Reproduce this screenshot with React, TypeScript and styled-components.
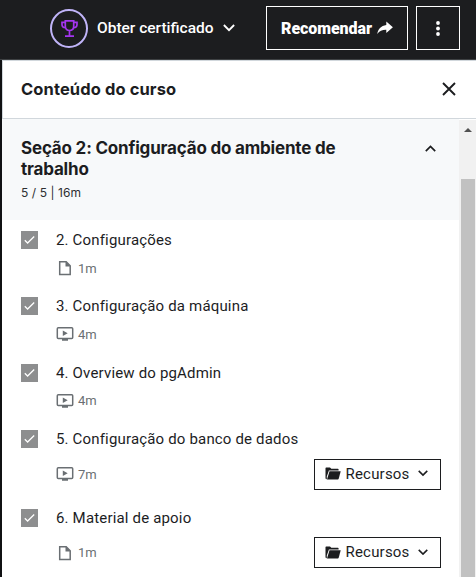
import React from 'react';
import styled, { createGlobalStyle } from 'styled-components';

const Global = createGlobalStyle`
  * { box-sizing: border-box; }
  html, body { margin: 0; overflow: hidden; background: #101113; }
  body, button { font-family: Roboto, "Liberation Sans", sans-serif; color: #1c1d1f; }
  button { padding: 0; margin: 0; background: none; border: 0; border-radius: 0; text-align: left; }
  h2, h3, ul { margin: 0; padding: 0; }
  svg { display: block; flex: none; }
`;

const Page = styled.div`
  width: 476px;
  height: 577px;
  display: flex;
  flex-direction: column;
  overflow: hidden;
`;

const TopBar = styled.header`
  flex: none;
  height: 60px;
  background: #1c1d1f;
  border-bottom: 1px solid #3e4143;
  display: flex;
  align-items: flex-start;
  padding: 6px 16px 0 50px;
`;

const Certificate = styled.button`
  display: flex;
  align-items: center;
  width: 216px;
  height: 44px;
  color: #fff;
`;

const Ring = styled.span`
  width: 38px;
  height: 39px;
  border: 2px solid #c0b4f8;
  border-radius: 50%;
  display: flex;
  align-items: center;
  justify-content: center;
  margin-right: 9px;
`;

const Txt = styled.span<{ $size: number; $weight?: number; $space?: number; $w?: number }>`
  font-size: ${p => p.$size}px;
  font-weight: ${p => p.$weight ?? 400};
  letter-spacing: ${p => p.$space ?? 0}px;
  width: ${p => (p.$w ? `${p.$w}px` : 'auto')};
  white-space: nowrap;
`;

const BarButton = styled.button<{ $width: number }>`
  width: ${p => p.$width}px;
  height: 44px;
  border: 1px solid #fff;
  color: #fff;
  display: flex;
  align-items: center;
  justify-content: center;
  gap: 5px;
  & + & { margin-left: 8px; }
`;

const Panel = styled.aside`
  flex: 1;
  min-height: 0;
  margin-left: 2px;
  background: #fff;
  border-top: 1px solid #d1d7dc;
  display: flex;
  flex-direction: column;
`;

const PanelHeader = styled.div`
  flex: none;
  height: 58px;
  border-left: 1px solid #d1d7dc;
  border-bottom: 1px solid #d1d7dc;
  display: flex;
  align-items: center;
  justify-content: space-between;
  padding: 0 20px 1px 18px;
`;

const Heading = styled.h2`
  font: 700 16.5px/20px Inter, sans-serif;
  letter-spacing: 0.1px;
`;

const Body = styled.div`
  flex: 1;
  min-height: 0;
  display: flex;
`;

const Content = styled.div`
  width: 457px;
`;

const Section = styled.div`
  height: 101px;
  background: #f7f9fa;
  display: flex;
  justify-content: space-between;
  padding: 19px 23.5px 0 19px;
`;

const SectionTitle = styled.h3`
  font: 700 17px/21px Inter, sans-serif;
  letter-spacing: -0.19px;
  white-space: nowrap;
`;

const Progress = styled.div`
  display: flex;
  margin-top: 4px;
  font: 400 12px/17px Inter, sans-serif;
  letter-spacing: 0.08px;
  color: #2d2f31;
  white-space: pre;
`;

const Chevron = styled.span`
  padding-top: 7px;
`;

const Lesson = styled.li<{ $tall?: boolean }>`
  height: ${p => (p.$tall ? 78.6 : 66.4)}px;
  display: flex;
  padding: 11px 18px 0 19px;
`;

const Check = styled.span`
  width: 17px;
  height: 18px;
  background: #8d8e8f;
  display: flex;
  align-items: center;
  justify-content: center;
`;

const Detail = styled.div`
  flex: 1;
  margin-left: 18px;
`;

const Title = styled.div`
  height: 18px;
  line-height: 18px;
  display: flex;
`;

const Meta = styled.div<{ $tall?: boolean }>`
  height: ${p => (p.$tall ? 31 : 18)}px;
  margin-top: ${p => (p.$tall ? 10.5 : 10)}px;
  display: flex;
  align-items: center;
  color: #6a6f73;
`;

const Kind = styled.span`
  width: 22px;
`;

const Resources = styled.button`
  width: 127px;
  height: 31px;
  margin-left: auto;
  border: 1px solid #1c1d1f;
  display: flex;
  align-items: center;
  gap: 4.5px;
  padding: 0 0 1px 10px;
`;

const Scrollbar = styled.div`
  width: 17px;
  margin-top: 1px;
  background: #f1f1f1;
  display: flex;
  flex-direction: column;
  align-items: center;
  padding-top: 8px;
`;

const Thumb = styled.div`
  width: 14px;
  flex: 1;
  margin-top: 47px;
  background: #c1c1c1;
`;

const Arrow = ({ up, w = 11, sw = 1.7 }: { up?: boolean; w?: number; sw?: number }) => (
  <svg width={w} height={w * 0.64} viewBox="0 0 11 7" fill="none" stroke="currentColor" strokeWidth={sw}>
    <path d={up ? 'M.8 6.1 5.5 1.4l4.7 4.7' : 'M.8.9l4.7 4.7L10.2.9'} />
  </svg>
);

const Trophy = () => (
  <svg width="17" height="17" viewBox="0 0 17 17" fill="none" stroke="#a435f0" strokeWidth="1.7">
    <path d="M4.300.9h8.400v5.300c0 2.700-1.600 4.300-4.200 4.300S4.300 8.900 4.300 6.200zM4.300 2.300H1v2.200c0 2 1.200 3.200 3.500 3.200M12.700 2.300H16v2.200c0 2-1.200 3.200-3.500 3.200M8.500 10.500v5.400M4 16.100h9" />
  </svg>
);

const Share = () => (
  <svg width="16" height="14" viewBox="0 0 16 14" fill="currentColor">
    <path d="M9.300.5 15.900 6.300 9.300 12V8.700C5.300 8.600 2.500 9.800.3 13 .9 8.200 4 4.700 9.300 3.900z" />
  </svg>
);

const DocIcon = () => (
  <svg width="17" height="16" viewBox="0 0 17 16">
    <path d="M3.700 1.700h6.500L14.200 5.700v8.800H3.700z" fill="none" stroke="#6a6f73" strokeWidth="1.500" />
    <path d="M9.500 1.200 14.700 6.400H9.500z" fill="#6a6f73" />
  </svg>
);

const VideoIcon = () => (
  <svg width="18" height="16" viewBox="0 0 18 16">
    <rect x="1.300" y="1.700" width="15.400" height="10.800" rx="1" fill="none" stroke="#6a6f73" strokeWidth="1.500" />
    <path d="M6.800 4.400 11.700 7.200 6.800 10zM6 12.800h6v1.900h-6z" fill="#6a6f73" />
  </svg>
);

const Folder = () => (
  <svg width="16" height="13" viewBox="0 0 16 13" fill="#1c1d1f">
    <path d="M.5 1.200Q.5.500 1.200.500H5l1.300 1.300h6.500q.8 0 .8.800v1H3.900L1.800 9.500V12.200Q.5 12.200.5 11z" />
    <path d="M4.500 4.300h11.200l-2 7.400q-.2.700-.9.700H2z" />
  </svg>
);

type Item = { title: string; time: string; video?: boolean; resources?: boolean };
const lessons: Item[] = [
  { title: '2. Configurações', time: '1m' },
  { title: '3. Configuração da máquina', time: '4m', video: true },
  { title: '4. Overview do pgAdmin', time: '4m', video: true },
  { title: '5. Configuração do banco de dados', time: '7m', video: true, resources: true },
  { title: '6. Material de apoio', time: '1m', resources: true },
];

export default function App() {
  return (
    <Page>
      <Global />
      <TopBar>
        <Certificate>
          <Ring><Trophy /></Ring>
          <Txt $size={15.5} $weight={500} $w={126}>Obter certificado</Txt>
          <Arrow w={12} />
        </Certificate>
        <BarButton $width={142}>
          <Txt $size={16} $weight={900} $space={-0.07}>Recomendar</Txt>
          <Share />
        </BarButton>
        <BarButton $width={44} aria-label="Mais">
          <svg width="4" height="15" viewBox="0 0 4 15" fill="currentColor">
            <circle cx="2" cy="2" r="1.900" /><circle cx="2" cy="7.500" r="1.900" /><circle cx="2" cy="13" r="1.900" />
          </svg>
        </BarButton>
      </TopBar>
      <Panel>
        <PanelHeader>
          <Heading>Conteúdo do curso</Heading>
          <svg width="14" height="14" viewBox="0 0 14 14" stroke="#1c1d1f" strokeWidth="1.900">
            <path d="M1 1l12 12M13 1 1 13" />
          </svg>
        </PanelHeader>
        <Body>
          <Content>
            <Section>
              <div>
                <SectionTitle>Seção 2: Configuração do ambiente de<br />trabalho</SectionTitle>
                <Progress>5 / 5 | 16m</Progress>
              </div>
              <Chevron><Arrow up /></Chevron>
            </Section>
            <ul>
              {lessons.map(l => (
                <Lesson key={l.title} $tall={l.resources}>
                  <Check>
                    <svg width="11" height="8" viewBox="0 0 11 8" fill="none" stroke="#fff" strokeWidth="1.300">
                      <path d="M.8 4.200 3.600 7 10.200.5" />
                    </svg>
                  </Check>
                  <Detail>
                    <Title><Txt $size={15} $space={0.17}>{l.title}</Txt></Title>
                    <Meta $tall={l.resources}>
                      <Kind>{l.video ? <VideoIcon /> : <DocIcon />}</Kind>
                      <Txt $size={13}>{l.time}</Txt>
                      {l.resources && (
                        <Resources>
                          <Folder />
                          <Txt $size={15} $w={68} $space={0.2}>Recursos</Txt>
                          <Arrow w={10} />
                        </Resources>
                      )}
                    </Meta>
                  </Detail>
                </Lesson>
              ))}
            </ul>
          </Content>
          <Scrollbar>
            <svg width="8" height="4" viewBox="0 0 8 4"><path d="M0 4 4 0l4 4z" fill="#505050" /></svg>
            <Thumb />
          </Scrollbar>
        </Body>
      </Panel>
    </Page>
  );
}
